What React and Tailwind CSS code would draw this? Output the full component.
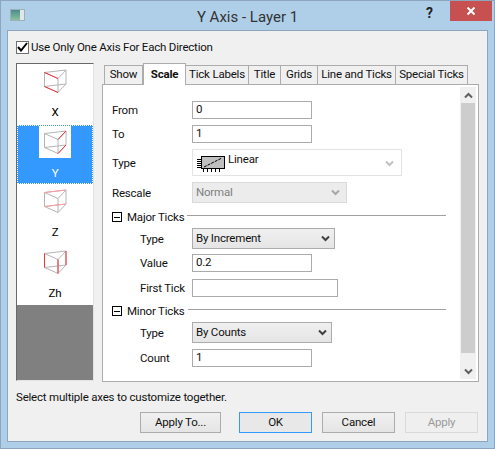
import React from "react";

const FONT = "[font-family:'Roboto','Noto_Sans',sans-serif]";

const tabs = [
  { name: "Show", width: "w-[39px]" },
  { name: "Scale", width: "w-[43px]", active: true },
  { name: "Tick Labels", width: "w-[64px]" },
  { name: "Title", width: "w-[33px]" },
  { name: "Grids", width: "w-[38px]" },
  { name: "Line and Ticks", width: "w-[79px]" },
  { name: "Special Ticks", width: "w-[73px]" },
];

const Chevron = ({ color = "#404040" }) => (
  <svg width="9" height="7" viewBox="0 0 9 7" fill="none">
    <path d="M1 1.5 L4.5 5 L8 1.5" stroke={color} strokeWidth="2" />
  </svg>
);

const Cube = ({ red = [], pink = [] }) => {
  const pts = { A: [0.5, 3.5], B: [22, 1], C: [14, 9.5], D: [14, 23.5], E: [0.5, 17.5], F: [22, 15] };
  const edges = ["AB", "BC", "AC", "CD", "AE", "ED", "DF", "FB", "EF"];
  const line = (e, color) => (
    <line key={e + color} x1={pts[e[0]][0]} y1={pts[e[0]][1]} x2={pts[e[1]][0]} y2={pts[e[1]][1]} stroke={color} strokeWidth="1" />
  );
  return (
    <svg width="23" height="25" viewBox="0 0 23 25" fill="none">
      {edges.map((e) => line(e, "#b4b4b4"))}
      {pink.map((e) => line(e, "#ff9aa0"))}
      {red.map((e) => line(e, "#f0303c"))}
    </svg>
  );
};

const AxisItem = ({ label, height, selected, red, pink }) => (
  <div
    className={`flex flex-col items-center ${height} ${
      selected ? "bg-[#3399ff] text-white outline-1 -outline-offset-1 outline-dotted outline-white" : "bg-white text-black"
    }`}
  >
    <div className="mt-px flex h-[32px] w-[32px] items-center justify-center bg-white">
      <Cube red={red} pink={pink} />
    </div>
    <span className="mt-[7px] leading-[16px]">{label}</span>
  </div>
);

const Input = ({ width, value }) => (
  <div className={`flex h-[18px] items-center border border-[#ababab] bg-white pl-[3px] leading-none ${width}`}>{value}</div>
);

const Select = ({ width, height, value }) => (
  <div className={`flex items-center justify-between border border-[#acacac] bg-gradient-to-b from-[#f0f0f0] to-[#e5e5e5] pl-[3px] pr-[4px] ${width} ${height}`}>
    <span>{value}</span>
    <Chevron />
  </div>
);

const Row = ({ label, sub, className = "", children }) => (
  <div className={`flex items-center ${className}`}>
    <span className={`w-[80px] leading-[16px] ${sub ? "pl-[28px]" : ""}`}>{label}</span>
    {children}
  </div>
);

const GroupHeader = ({ label, className = "" }) => (
  <div className={`flex h-[14px] w-[334px] items-start ${className}`}>
    <div className="mt-[2px] flex h-[10px] w-[10px] items-center justify-center border border-black">
      <div className="h-px w-[6px] bg-black" />
    </div>
    <span className="ml-[5px] leading-[14px]">{label}</span>
    <div className="ml-[3px] mt-[5px] h-px flex-1 bg-[#a0a0a0]" />
  </div>
);

const LinearIcon = () => (
  <svg width="28" height="17" viewBox="0 0 28 17" fill="none">
    <rect x="4.5" y="1.5" width="23" height="12" fill="#c0c0c0" stroke="#000" />
    <path d="M7 12 L25 3" stroke="#000" strokeDasharray="3 1" />
    <path d="M0 4.5h4M0 6.5h4M0 8.5h4M0 10.5h4M0 12.5h4" stroke="#000" />
    <path d="M6.5 14v3M10.5 14v3M14.5 14v3M18.5 14v3M22.5 14v3" stroke="#000" />
  </svg>
);

const Button = ({ label, width, variant }) => (
  <div
    className={`flex h-[21px] items-center justify-center border ${width} ${
      variant === "default"
        ? "border-[#3399ff] bg-[#e8e8e8]"
        : variant === "disabled"
          ? "border-[#d9d9d9] bg-[#efefef] text-[#9a9a9a]"
          : "border-[#acacac] bg-gradient-to-b from-[#f0f0f0] to-[#e5e5e5]"
    }`}
  >
    {label}
  </div>
);

export default function App() {
  return (
    <div className={`h-[449px] w-[495px] border border-[#8ea6bd] bg-[#afcfe9] text-[11.5px] tracking-[-0.2px] text-[#111] ${FONT}`}>
      {/* title bar */}
      <div className="relative flex h-[29px] items-start">
        <div className="ml-[9px] mt-[8px] flex h-[12px] w-[15px] border border-[#9db0b5] bg-[#dfe8e8]">
          <div className="h-full w-[9px] bg-gradient-to-b from-[#4a8c8c] to-[#8ac0a0]" />
        </div>
        <div className="flex-1 pl-[44px] pt-[6px] text-center text-[15px] leading-[20px] tracking-normal text-[#333]">Y Axis - Layer 1</div>
        <div className="mr-[10px] mt-[4px] w-[14px] text-[14px] font-bold leading-[16px] text-[#222]">?</div>
        <div className="mr-[2px] flex h-[20px] w-[42px] items-center justify-center bg-[#c75050]">
          <svg width="10" height="10" viewBox="0 0 10 10">
            <path d="M1.5 1.5 L8.5 8.5 M8.5 1.5 L1.5 8.5" stroke="#fff" strokeWidth="2" />
          </svg>
        </div>
      </div>

      {/* dialog body */}
      <div className="ml-[6px] h-[412px] w-[481px] border border-[#8ea6bd] bg-[#f0f0f0] pl-[8px] pt-[9px]">
        <div className="flex h-[14px] items-center">
          <div className="flex h-[13px] w-[13px] items-center justify-center border border-[#707070] bg-white">
            <svg width="11" height="10" viewBox="0 0 11 10" fill="none">
              <path d="M1 5 L4 8.5 L10 1" stroke="#000" strokeWidth="2" />
            </svg>
          </div>
          <span className="ml-[2px] pt-px">Use Only One Axis For Each Direction</span>
        </div>

        <div className="mt-[9px] flex items-start">
          {/* axis list */}
          <div className="flex h-[318px] w-[78px] flex-col border-b border-l border-r border-t border-b-[#e3e3e3] border-l-[#696969] border-r-[#e3e3e3] border-t-[#696969] bg-[#808080]">
            <AxisItem label="X" height="h-[61px]" red={["AC", "ED"]} />
            <AxisItem label="Y" height="h-[59px]" selected red={["BC", "DF"]} />
            <AxisItem label="Z" height="h-[61px]" pink={["AB", "EF"]} />
            <AxisItem label="Zh" height="h-[60px]" red={["AE", "CD", "FB"]} />
          </div>

          {/* tabbed pane */}
          <div className="ml-[8px] flex flex-col">
            <div className="flex h-[21px] items-end pl-[2px]">
              {tabs.map((tab) => (
                <div
                  key={tab.name}
                  className={`flex items-center justify-center border border-[#acacac] ${tab.width} ${
                    tab.active
                      ? "relative z-10 -mb-px h-[22px] border-b-0 bg-white font-bold"
                      : "-ml-px h-[19px] border-b-0 bg-[#f0f0f0] first:ml-0"
                  }`}
                >
                  {tab.name}
                </div>
              ))}
            </div>
            <div className="flex h-[298px] w-[377px] border border-[#acacac] bg-white">
              <div className="flex-1 pl-[9px] pt-[16px]">
                <Row label="From"><Input width="w-[120px]" value="0" /></Row>
                <Row label="To" className="mt-[6px]"><Input width="w-[120px]" value="1" /></Row>
                <Row label="Type" className="mt-[6px]">
                  <div className="flex h-[27px] w-[210px] items-start justify-between border border-[#e3e3e3] pl-[4px] pr-[7px] pt-px">
                    <div className="flex items-start">
                      <div className="mt-[4px]"><LinearIcon /></div>
                      <span className="ml-[3px] leading-[16px]">Linear</span>
                    </div>
                    <div className="mt-[9px]"><Chevron color="#c0c0c0" /></div>
                  </div>
                </Row>
                <Row label="Rescale" className="mt-[6px]">
                  <div className="flex h-[21px] w-[155px] items-center justify-between border border-[#d9d9d9] bg-[#ececec] pl-[3px] pr-[6px] text-[#808080]">
                    <span>Normal</span>
                    <Chevron color="#a8a8a8" />
                  </div>
                </Row>
                <GroupHeader label="Major Ticks" className="mt-[7px]" />
                <Row label="Type" sub className="mt-[4px]"><Select width="w-[143px]" height="h-[21px]" value="By Increment" /></Row>
                <Row label="Value" sub className="mt-[5px]"><Input width="w-[120px]" value="0.2" /></Row>
                <Row label="First Tick" sub className="mt-[7px]"><Input width="w-[146px]" value="" /></Row>
                <GroupHeader label="Minor Ticks" className="mt-[7px]" />
                <Row label="Type" sub className="mt-[4px]"><Select width="w-[140px]" height="h-[21px]" value="By Counts" /></Row>
                <Row label="Count" sub className="mt-[6px]"><Input width="w-[120px]" value="1" /></Row>
              </div>

              {/* scrollbar */}
              <div className="my-[2px] mr-[2px] flex w-[16px] flex-col bg-[#f0f0f0]">
                <div className="flex h-[16px] items-center justify-center">
                  <div className="rotate-180"><Chevron color="#606060" /></div>
                </div>
                <div className="mx-px h-[250px] bg-[#cdcdcd]" />
                <div className="flex-1" />
                <div className="flex h-[16px] items-center justify-center"><Chevron color="#606060" /></div>
              </div>
            </div>
          </div>
        </div>

        <div className="mt-[7px] leading-[16px]">Select multiple axes to customize together.</div>

        <div className="mt-[7px] flex">
          <div className="ml-[124px]"><Button label="Apply To..." width="w-[81px]" /></div>
          <div className="ml-[18px]"><Button label="OK" width="w-[73px]" variant="default" /></div>
          <div className="ml-[10px]"><Button label="Cancel" width="w-[73px]" /></div>
          <div className="ml-[10px]"><Button label="Apply" width="w-[73px]" variant="disabled" /></div>
        </div>
      </div>
    </div>
  );
}
